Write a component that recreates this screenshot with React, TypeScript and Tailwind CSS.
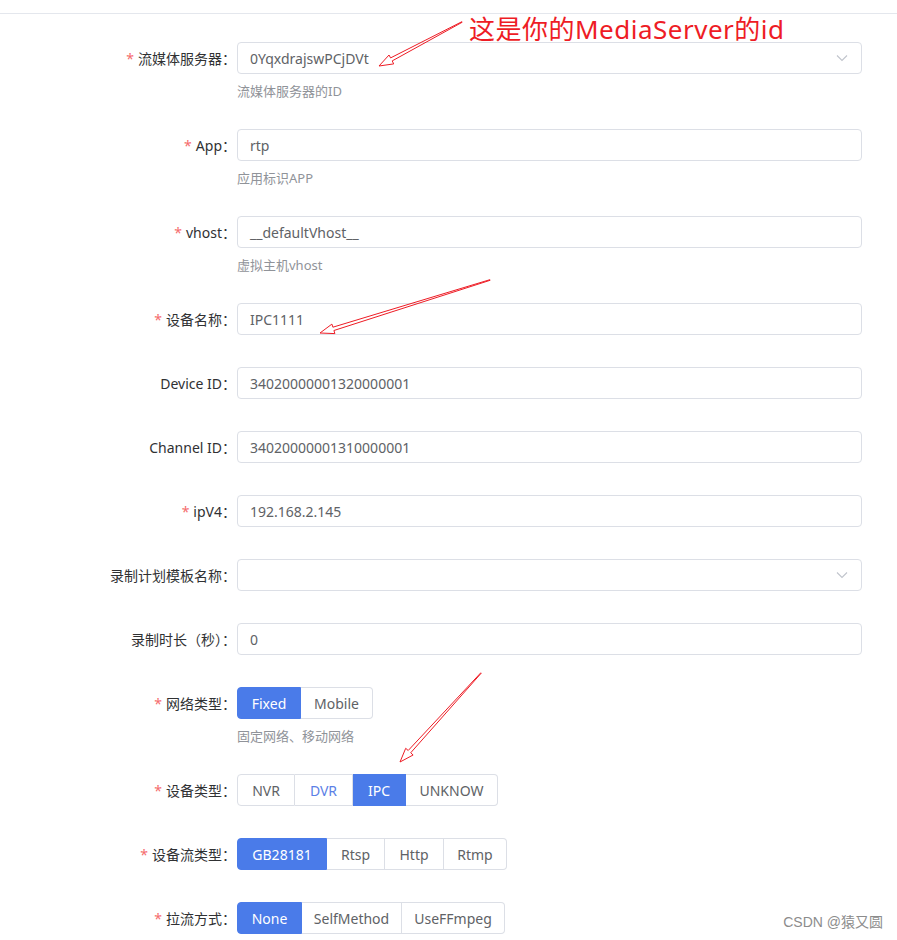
import React from 'react';

type Opt = { label: string; w: string; active?: boolean; hover?: boolean };

const FONT = "font-['Noto_Sans','Noto_Sans_CJK_SC',sans-serif]";

// tapered red annotation arrow (like a screenshot tool draws)
const Arrow = ({ x1, y1, x2, y2 }: { x1: number; y1: number; x2: number; y2: number }) => {
  const dx = x2 - x1;
  const dy = y2 - y1;
  const len = Math.sqrt(dx * dx + dy * dy);
  const ux = dx / len;
  const uy = dy / len;
  const nx = -uy;
  const ny = ux;
  const head = 14;
  const nkX = x2 - ux * head;
  const nkY = y2 - uy * head;
  const p = (x: number, y: number, k: number) => `${(x + nx * k).toFixed(1)},${(y + ny * k).toFixed(1)}`;
  const pts = [
    p(x1, y1, 0.3),
    p(nkX, nkY, 1.7),
    p(nkX, nkY, 5),
    `${x2},${y2}`,
    p(nkX, nkY, -5),
    p(nkX, nkY, -1.7),
    p(x1, y1, -0.3),
  ].join(' ');
  return <polygon points={pts} fill="none" stroke="#ee1c25" strokeWidth={1} strokeLinejoin="miter" />;
};

const Label = ({ text, required }: { text: string; required?: boolean }) => (
  <div className="w-[237px] shrink-0 h-8 flex items-center justify-end pr-[1px] text-[14px] text-[#303133]">
    {required && <span className="text-[#f56c6c] mr-[4px]">*</span>}
    <span>{text}</span>
  </div>
);

const Help = ({ text }: { text: string }) => (
  <div className="pt-[7px] leading-[20px] -mb-[4px] text-[13px] text-[#909399]">{text}</div>
);

const TextInput = ({ value, select }: { value: string; select?: boolean }) => (
  <div className="h-8 w-full border border-[#dcdfe6] rounded-[4px] bg-white flex items-center pl-[12px] pr-[12px] text-[14px] text-[#606266]">
    <span className="flex-1">{value}</span>
    {select && (
      <svg width="12" height="8" viewBox="0 0 12 8" className="mr-[1px]">
        <path d="M1 1.5 L6 6.5 L11 1.5" fill="none" stroke="#c0c4cc" strokeWidth="1.1" />
      </svg>
    )}
  </div>
);

const RadioGroup = ({ options }: { options: Opt[] }) => (
  <div className="flex h-8 text-[14px]">
    {options.map((o, i) => (
      <div
        key={o.label}
        className={`${o.w} h-8 flex items-center justify-center border-y border-r ${i === 0 ? 'border-l rounded-l-[4px]' : ''} ${
          i === options.length - 1 ? 'rounded-r-[4px]' : ''
        } ${
          o.active
            ? 'bg-[#4a7be9] border-[#4a7be9] text-white'
            : o.hover
            ? 'bg-white border-[#dcdfe6] text-[#5b80e6]'
            : 'bg-white border-[#dcdfe6] text-[#606266]'
        }`}
      >
        {o.label}
      </div>
    ))}
  </div>
);

const Row = ({
  label,
  required,
  help,
  children,
}: {
  label: string;
  required?: boolean;
  help?: string;
  children: React.ReactNode;
}) => (
  <div className="flex mb-[32px]">
    <Label text={label} required={required} />
    <div className="flex-1 mr-[35px]">
      {children}
      {help && <Help text={help} />}
    </div>
  </div>
);

export default function App() {
  return (
    <div className={`relative w-[897px] h-[940px] overflow-hidden bg-white ${FONT}`}>
      <div className="pt-[13px]">
        <div className="border-t border-[#e4e7ed]" />
        <div className="pt-[28px]">
          <Row label="流媒体服务器：" required help="流媒体服务器的ID">
            <TextInput value="0YqxdrajswPCjDVt" select />
          </Row>
          <Row label="App：" required help="应用标识APP">
            <TextInput value="rtp" />
          </Row>
          <Row label="vhost：" required help="虚拟主机vhost">
            <TextInput value="__defaultVhost__" />
          </Row>
          <Row label="设备名称：" required>
            <TextInput value="IPC1111" />
          </Row>
          <Row label="Device ID：">
            <TextInput value="34020000001320000001" />
          </Row>
          <Row label="Channel ID：">
            <TextInput value="34020000001310000001" />
          </Row>
          <Row label="ipV4：" required>
            <TextInput value="192.168.2.145" />
          </Row>
          <Row label="录制计划模板名称：">
            <TextInput value="" select />
          </Row>
          <Row label="录制时长（秒）：">
            <TextInput value="0" />
          </Row>
          <Row label="网络类型：" required help="固定网络、移动网络">
            <RadioGroup
              options={[
                { label: 'Fixed', w: 'w-[64px]', active: true },
                { label: 'Mobile', w: 'w-[72px]' },
              ]}
            />
          </Row>
          <Row label="设备类型：" required>
            <RadioGroup
              options={[
                { label: 'NVR', w: 'w-[58px]' },
                { label: 'DVR', w: 'w-[58px]', hover: true },
                { label: 'IPC', w: 'w-[53px]', active: true },
                { label: 'UNKNOW', w: 'w-[92px]' },
              ]}
            />
          </Row>
          <Row label="设备流类型：" required>
            <RadioGroup
              options={[
                { label: 'GB28181', w: 'w-[90px]', active: true },
                { label: 'Rtsp', w: 'w-[58px]' },
                { label: 'Http', w: 'w-[59px]' },
                { label: 'Rtmp', w: 'w-[63px]' },
              ]}
            />
          </Row>
          <Row label="拉流方式：" required>
            <RadioGroup
              options={[
                { label: 'None', w: 'w-[65px]', active: true },
                { label: 'SelfMethod', w: 'w-[100px]' },
                { label: 'UseFFmpeg', w: 'w-[103px]' },
              ]}
            />
          </Row>
        </div>
      </div>

      {/* annotations drawn over the screenshot */}
      <div className="absolute left-[469px] top-[11px] leading-[36px] text-[26px] tracking-[0.5px] text-[#ee1c25] font-['Noto_Sans','Noto_Sans_CJK_SC',sans-serif]">
        这是你的MediaServer的id
      </div>
      <svg className="absolute left-0 top-0 pointer-events-none" width="897" height="940">
        <Arrow x1={462} y1={22} x2={379} y2={66} />
        <Arrow x1={490} y1={280} x2={320} y2={333} />
        <Arrow x1={481} y1={673} x2={400} y2={762} />
      </svg>

      <div className="absolute right-[14px] bottom-[7px] text-[14px] text-[#8c8c8c] font-['Liberation_Sans','Noto_Sans_CJK_SC',sans-serif]">
        CSDN @猿又圆
      </div>
    </div>
  );
}
